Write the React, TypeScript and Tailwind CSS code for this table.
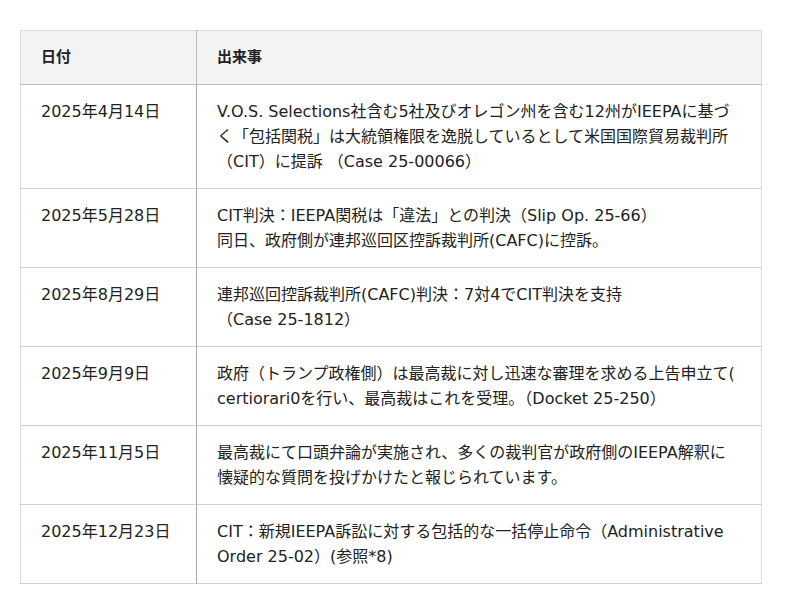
const rows: { date: string; lines: string[] }[] = [
  {
    date: '2025年4月14日',
    lines: [
      'V.O.S. Selections社含む5社及びオレゴン州を含む12州がIEEPAに基づ',
      'く「包括関税」は大統領権限を逸脱しているとして米国国際貿易裁判所',
      '（CIT）に提訴 （Case 25-00066）',
    ],
  },
  {
    date: '2025年5月28日',
    lines: [
      'CIT判決：IEEPA関税は「違法」との判決（Slip Op. 25-66）',
      '同日、政府側が連邦巡回区控訴裁判所(CAFC)に控訴。',
    ],
  },
  {
    date: '2025年8月29日',
    lines: ['連邦巡回控訴裁判所(CAFC)判決：7対4でCIT判決を支持', '（Case 25-1812）'],
  },
  {
    date: '2025年9月9日',
    lines: [
      '政府（トランプ政権側）は最高裁に対し迅速な審理を求める上告申立て(',
      'certiorari0を行い、最高裁はこれを受理。（Docket 25-250）',
    ],
  },
  {
    date: '2025年11月5日',
    lines: [
      '最高裁にて口頭弁論が実施され、多くの裁判官が政府側のIEEPA解釈に',
      '懐疑的な質問を投げかけたと報じられています。',
    ],
  },
  {
    date: '2025年12月23日',
    lines: [
      'CIT：新規IEEPA訴訟に対する包括的な一括停止命令（Administrative',
      'Order 25-02）(参照*8)',
    ],
  },
]

export default function App() {
  return (
    <div className="min-h-[614px] bg-white pt-[30px] pl-5 font-['DejaVu_Sans','Noto_Sans_CJK_JP',sans-serif] text-[16px] leading-[25px] text-[#222]">
      <table className="w-[742px] border-collapse border border-[#dddddd]">
        <thead>
          <tr className="bg-[#f3f3f3]">
            <th className="w-[176px] border-r border-b border-[#bdbdbd] px-5 py-[14px] text-left text-[15px] font-bold">日付</th>
            <th className="border-b border-[#bdbdbd] px-5 py-[14px] text-left text-[15px] font-bold">出来事</th>
          </tr>
        </thead>
        <tbody>
          {rows.map(r => (
            <tr key={r.date} className="border-b border-[#d0d0d0] align-top">
              <td className="border-r border-[#a9a9a9] px-5 py-[14px] whitespace-nowrap">{r.date}</td>
              <td className="px-5 py-[14px]">
                {r.lines.map((l, i) => (
                  <div key={i} className="whitespace-nowrap">{l}</div>
                ))}
              </td>
            </tr>
          ))}
        </tbody>
      </table>
    </div>
  )
}
